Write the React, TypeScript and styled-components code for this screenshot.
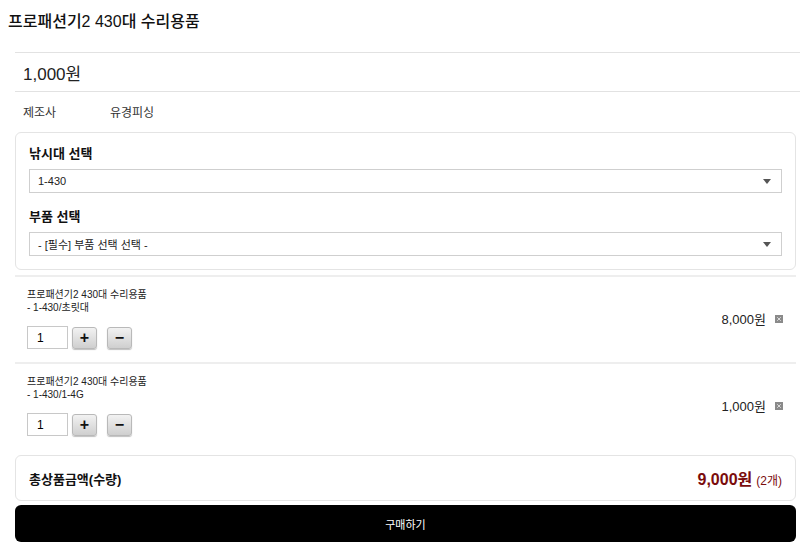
import React from "react";
import styled, { createGlobalStyle } from "styled-components";

const GlobalStyle = createGlobalStyle`
  html, body {
    margin: 0;
    padding: 0;
    background: #fff;
    font-family: "Liberation Sans", "Noto Sans CJK KR", sans-serif;
    color: #222;
  }
  * { box-sizing: border-box; }
`;

const Page = styled.div`
  width: 800px;
`;

const Title = styled.h1`
  margin: 0;
  padding: 12px 8px 0;
  height: 52px;
  font-size: 16px;
  line-height: 20px;
  font-weight: 500;
  color: #111;
`;

const Info = styled.div`
  margin-left: 15px;
  border-top: 1px solid #e2e2e2;
`;

const PriceRow = styled.div`
  height: 39px;
  padding-left: 8px;
  display: flex;
  align-items: center;
  font-size: 17px;
  color: #222;
  border-bottom: 1px solid #e2e2e2;
`;

const SpecRow = styled.div`
  display: flex;
  align-items: center;
  height: 38px;
  padding-left: 8px;
  font-size: 12px;
  color: #333;
`;

const SpecName = styled.span`
  width: 87px;
`;

const Body = styled.div`
  padding: 2px 4px 0 15px;
`;

const Card = styled.div`
  border: 1px solid #e4e4e4;
  border-radius: 6px;
  padding: ${(p: { $pad?: string }) => p.$pad || "0"};
`;

const Label = styled.div`
  font-size: 13px;
  font-weight: 700;
  line-height: 18px;
  color: #111;
  margin: ${(p: { $top?: number }) => p.$top || 0}px 0 6px;
`;

const Select = styled.div`
  position: relative;
  height: 24px;
  border: 1px solid #cfcfcf;
  padding-left: 8px;
  display: flex;
  align-items: center;
  font-size: 11px;
  color: #222;
`;

const Arrow = styled.span`
  position: absolute;
  right: 10px;
  top: 9px;
  width: 0;
  height: 0;
  border-left: 4px solid transparent;
  border-right: 4px solid transparent;
  border-top: 5px solid #555;
`;

const Items = styled.div`
  margin-top: 5px;
  border-top: 2px solid #eee;
`;

const Item = styled.div`
  display: flex;
  align-items: center;
  justify-content: space-between;
  padding: 11px 13px 13px 12px;
  & + & {
    border-top: 2px solid #eee;
  }
`;

const ItemInfo = styled.div`
  display: flex;
  flex-direction: column;
`;

const ItemName = styled.div`
  font-size: 10px;
  line-height: 13px;
  color: #222;
`;

const QtyRow = styled.div`
  display: flex;
  align-items: center;
  margin-top: 12px;
`;

const QtyInput = styled.div`
  width: 41px;
  height: 23px;
  border: 1px solid #c8c8c8;
  padding-left: 9px;
  display: flex;
  align-items: center;
  font-size: 12px;
  color: #000;
`;

const QtyButton = styled.button`
  width: 25px;
  height: 22px;
  margin-left: ${(p: { $gap: number }) => p.$gap}px;
  padding: 0;
  border: 1px solid #b9b9b9;
  border-radius: 3px;
  background: linear-gradient(#f2f2f2, #cfcfcf);
  box-shadow: 0 1px 1px rgba(0, 0, 0, 0.25);
  font-family: "Liberation Sans", sans-serif;
  font-size: 16px;
  font-weight: 700;
  line-height: 18px;
  color: #111;
  display: flex;
  align-items: center;
  justify-content: center;
`;

const ItemPrice = styled.div`
  display: flex;
  align-items: center;
  gap: 9px;
  font-size: 13px;
  color: #222;
`;

const Total = styled(Card)`
  display: flex;
  align-items: center;
  justify-content: space-between;
  height: 46px;
  margin-top: 6px;
`;

const TotalLabel = styled.span`
  font-size: 13px;
  font-weight: 700;
  color: #111;
`;

const TotalValue = styled.span`
  font-size: 16px;
  font-weight: 700;
  color: #7a0c0c;
`;

const TotalCount = styled.span`
  font-size: 12px;
  font-weight: 400;
  color: #7a0c0c;
  margin-left: 4px;
`;

const BuyButton = styled.button`
  width: 100%;
  height: 37px;
  margin-top: 4px;
  border: none;
  border-radius: 6px;
  background: #000;
  color: #fff;
  font-family: "Liberation Sans", "Noto Sans CJK KR", sans-serif;
  font-size: 11px;
`;

const DeleteIcon = () => (
  <svg width="8" height="8" viewBox="0 0 8 8">
    <rect width="8" height="8" fill="#8a8a8a" />
    <path d="M2.2 2.2 L5.8 5.8 M5.8 2.2 L2.2 5.8" stroke="#dcdcdc" strokeWidth="1" />
  </svg>
);

const items = [
  { option: "- 1-430/초릿대", price: "8,000원" },
  { option: "- 1-430/1-4G", price: "1,000원" },
];

export default function App() {
  return (
    <Page>
      <GlobalStyle />
      <Title>프로패션기2 430대 수리용품</Title>
      <Info>
        <PriceRow>1,000원</PriceRow>
        <SpecRow>
          <SpecName>제조사</SpecName>
          <span>유경피싱</span>
        </SpecRow>
      </Info>
      <Body>
        <Card $pad="12px 13px 13px 13px">
          <Label>낚시대 선택</Label>
          <Select>
            1-430
            <Arrow />
          </Select>
          <Label $top={15}>부품 선택</Label>
          <Select>
            - [필수] 부품 선택 선택 -
            <Arrow />
          </Select>
        </Card>
        <Items>
          {items.map((it) => (
            <Item key={it.option}>
              <ItemInfo>
                <ItemName>프로패션기2 430대 수리용품</ItemName>
                <ItemName>{it.option}</ItemName>
                <QtyRow>
                  <QtyInput>1</QtyInput>
                  <QtyButton $gap={4}>+</QtyButton>
                  <QtyButton $gap={10}>−</QtyButton>
                </QtyRow>
              </ItemInfo>
              <ItemPrice>
                {it.price}
                <DeleteIcon />
              </ItemPrice>
            </Item>
          ))}
        </Items>
        <Total $pad="0 13px 0 13px">
          <TotalLabel>총상품금액(수량)</TotalLabel>
          <TotalValue>
            9,000원<TotalCount>(2개)</TotalCount>
          </TotalValue>
        </Total>
        <BuyButton>구매하기</BuyButton>
      </Body>
    </Page>
  );
}
